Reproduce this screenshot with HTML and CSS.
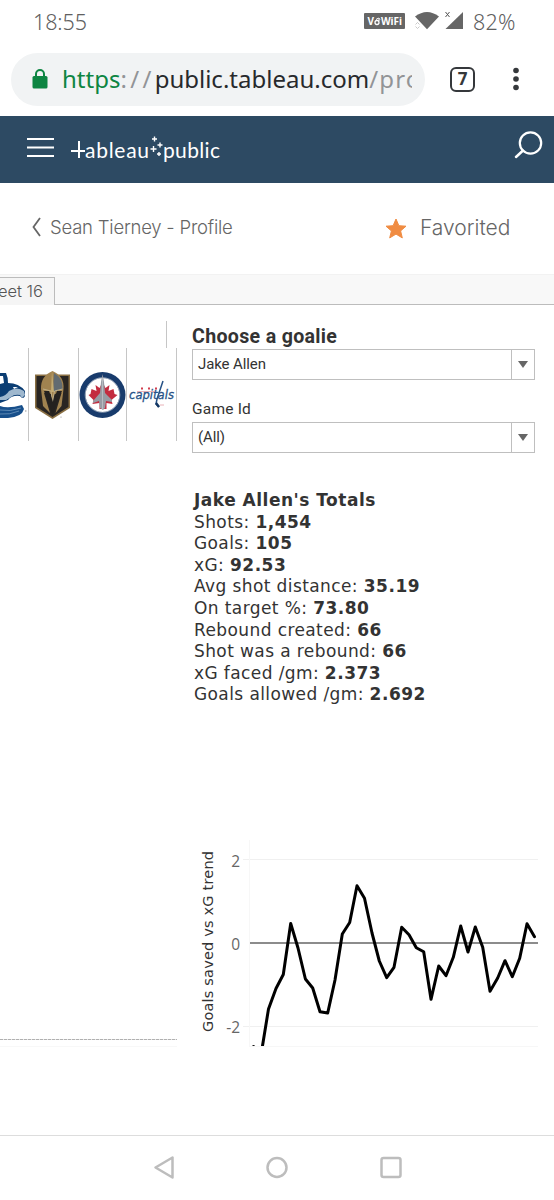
FILE: index.html
```html
<!DOCTYPE html>
<html lang="en">
<head>
<meta charset="utf-8">
<title>Tableau Public</title>
<link rel="stylesheet" href="styles.css">
</head>
<body>
<div class="screen">
  <div class="status">
    <span class="time">18:55</span>
    <svg class="status-icons" width="102" height="18" viewBox="363 12 102 18">
      <rect x="364" y="13" width="41" height="16" rx="1" fill="#666"/>
      <text x="367.500" y="25" class="vowifi" textLength="8">V</text>
      <circle cx="377" cy="22.500" r="2" fill="none" stroke="#fff" stroke-width="1.300"/>
      <path d="M376 19.500q3-3 4 0M379 18v3" fill="none" stroke="#fff"/>
      <text x="381" y="25" class="vowifi" textLength="21">WiFi</text>
      <path d="M415 16.500Q427 7.500 439 16.500L427 29.300Z" fill="#666"/>
      <path d="M415.500 24.500l2-2 2 2M415.500 26.500l2 2 2-2" fill="none" stroke="#bbb" stroke-width=".8"/>
      <path d="M445.500 12l4 5M449.500 12l-4 5" stroke="#555" stroke-width="1"/>
      <path d="M463 12V29H445.500Z" fill="#666"/>
    </svg>
    <span class="battery">82%</span>
  </div>
  <div class="browser">
    <div class="omnibox">
      <svg width="16" height="20" viewBox="0 0 16 20"><path d="M4 8V5a4 4 0 0 1 8 0v3" fill="none" stroke="#0d8542" stroke-width="2"/><rect x=".5" y="7" width="15" height="12.500" rx="1.500" fill="#0d8542"/></svg>
      <span class="url"><span class="scheme">https</span><span class="dim slashes">://</span>public.tableau.com<span class="dim path">/pro</span></span>
    </div>
    <div class="tabs-count">7</div>
    <svg class="more" width="6" height="24" viewBox="0 0 6 24" fill="#35383b"><circle cx="3" cy="3.500" r="2.800"/><circle cx="3" cy="12" r="2.800"/><circle cx="3" cy="20.500" r="2.800"/></svg>
  </div>
  <header class="site-head">
    <svg width="554" height="67" viewBox="0 116 554 67" fill="none" stroke="#fff" stroke-width="2.200">
      <path d="M27 139H54M27 147.500H54M27 156H54"/>
      <path d="M79 141V158M71 151H85" stroke-width="2"/>
      <g class="word"><text x="85" y="158" textLength="64">ableau</text><text x="163" y="158" textLength="57">public</text></g>
      <path d="M154.500 136.500v5M152 139h5M160 142.500v5M157.500 145h5M153.500 146v6M150.500 149h6M159 152v4M157 154h4" stroke-width="1.400"/>
      <circle cx="530.500" cy="143" r="10.700"/><path d="M523 150.500L516 157" stroke-linecap="round" stroke-width="2.500"/>
    </svg>
  </header>
  <div class="profile">
    <svg width="10" height="20" viewBox="0 0 10 20"><path d="M9 1L2.500 10l6.500 9" fill="none" stroke="#666" stroke-width="1.800"/></svg>
    <span class="author">Sean Tierney - Profile</span>
    <svg class="star" width="22" height="21" viewBox="0 0 22 21"><path d="M11 1l2.900 6.700 7.100.5-5.400 4.700 1.700 7L11 16.100 4.700 19.900l1.700-7L1 8.200l7.100-.5z" fill="#f08c42" stroke="#f08c42" stroke-linejoin="round"/></svg>
    <span class="fav">Favorited</span>
  </div>
  <div class="sheets"><div class="sheet"><span>Sheet 16</span></div></div>
  <main class="dash">
    <section class="teams">
      <svg width="180" height="130" viewBox="0 315 180 130">
        <path d="M28.500 348V441M78.500 348V441M126.500 348V441M176.500 348V441M166.500 321V348" stroke="#c6c6c6"/>
        <g>
          <path d="M0 373h6q2 4 2 10 11 0 17 8l0 5q-2 4-5 0-8-1-12 4l-8 3z" fill="#0b3d73"/>
          <path d="M9 391q8-5 15 0l1 4-3 3-2-3q-6-1-9 2l-5 3-6 0v-3q6-1 9-6z" fill="#9fb8ce"/>
          <path d="M0 376l3 0 1 7-4 1zM13 387l5 0-4 2z" fill="#fff"/>
          <path d="M0 406q8 3 22-1l2 4q-2 8-16 9H0z" fill="#174f8b"/>
          <path d="M0 410q10 2 21-2M0 414q10 1 19-3" fill="none" stroke="#6f98bf" stroke-width=".8"/>
          <circle cx="25.800" cy="411" r=".7" fill="#999"/>
        </g>
        <g>
          <path d="M35 374.500H70V408L52.500 419 35 408Z" fill="#896f43"/>
          <path d="M36.500 376H68.500V407L52.500 417 36.500 407Z" fill="#292522"/>
          <path d="M52.500 371q-12 5-11.500 18l2 17 7 7-6-20 7 1 1.500 6 2-6 7-1-6 20 6-7 2-17q1-13-11-18z" fill="#a18350"/>
          <path d="M54 373q9 5 8.500 16l-9.500 3z" fill="#626b71"/><path d="M43 389l8 2 1.500 11 2-11 8-2" fill="none" stroke="#c9bb96" stroke-width=".8"/>
          <path d="M44 391h5l4 11 4-11h5L52.500 415z" fill="#24211f"/>
          <path d="M52 371l2 21h-3z" fill="#c4ac73"/><circle cx="61" cy="417" r=".6" fill="#888"/>
        </g>
        <g>
          <circle cx="102.500" cy="395" r="23" fill="#183b6c"/><circle cx="102.500" cy="395" r="17" fill="#fff"/>
          <circle cx="102.500" cy="395" r="17.300" fill="none" stroke="#a9b5c4" stroke-width=".8"/>
          <path d="M102.500 382l3 6 4-3-1 6 5-2 1 5 3 1-6 5 1 4-6-1v6h-7v-6l-7 1 1-4-5-5 2-1 1-5 5 2-1-6 4 3z" fill="#c32c3f"/>
          <path d="M102.500 374l1.500 8 1 11 7 7v2l-6-1-1 7-2 2-3-2-1-7-6 2v-2l7-8 1-11z" fill="#989ca4"/><path d="M102.500 378v31" stroke="#c5c9ce" stroke-width=".7"/>
        </g>
        <g>
          <text class="caps" x="129" y="399" textLength="45" lengthAdjust="spacingAndGlyphs">capitals</text>
          <path d="M163 381l-6 18-1 5 3 3" fill="none" stroke="#275286" stroke-width="1.500"/>
          <path d="M156 403l3 4" stroke="#143763" stroke-width="2.500"/>
          <path d="M137 391.500H155M160 405h4" stroke="#e3a0a6" stroke-width=".8"/><path d="M141 388.500h2M148 388.500h2M155 388.500h2" stroke="#d23e4e" stroke-width="2"/>
        </g>
      </svg>
      <div class="rule"></div><div class="base"></div>
    </section>
    <section class="detail">
      <h2>Choose a goalie</h2>
      <div class="select"><span>Jake Allen</span><i><b></b></i></div>
      <div class="label">Game Id</div>
      <div class="select"><span>(All)</span><i><b></b></i></div>
      <div class="totals">
        <div><b>Jake Allen's Totals</b></div>
        <div>Shots: <b>1,454</b></div><div>Goals: <b>105</b></div><div>xG: <b>92.53</b></div>
        <div>Avg shot distance: <b>35.19</b></div><div>On target %: <b>73.80</b></div>
        <div>Rebound created: <b>66</b></div><div>Shot was a rebound: <b>66</b></div>
        <div>xG faced /gm: <b>2.373</b></div><div>Goals allowed /gm: <b>2.692</b></div>
      </div>
      <svg class="chart" width="354" height="217" viewBox="192 835 354 217">
        <path d="M243 859.500H538M243 1026.500H538" stroke="#f0f0f0"/><path d="M249.500 840V1047M249 1046.500H538" stroke="#f7f7f7"/>
        <path d="M250 943H538" stroke="#666" stroke-width="1.500"/>
        <clipPath id="plot"><path d="M249 840H540V1046H249Z"/></clipPath>
        <polyline clip-path="url(#plot)" fill="none" stroke="#000" stroke-width="3" stroke-linejoin="round" stroke-linecap="round" points="253.500,1046.500 261,1055 268.500,1009 276,988.500 283.300,974.500 290.700,923.500 298,948 305.400,979 312.700,988 320,1011.700 327.700,1013 335,980 342.300,934 349.700,922.500 357,885.700 364.500,898.300 372,933 379.300,961 386.700,977.700 394,967.300 401.700,927.300 409,934.700 416.300,947.700 423.700,951.700 431,999.300 438.700,966 446,975.700 453.300,957.300 460.700,926 468,952 475.300,927 482.700,947.300 490,991.300 497.700,978 505,960.700 512.300,976.700 519.700,958.300 527,923.700 534.500,936.700"/>
        <g class="ticks" text-anchor="end"><text x="240" y="866.500">2</text><text x="240" y="949.500">0</text><text x="240" y="1033">-2</text></g>
        <text class="axis" transform="translate(213 1032) rotate(-90)" textLength="181">Goals saved vs xG trend</text>
      </svg>
    </section>
  </main>
  <nav class="sysnav">
    <svg width="554" height="64" viewBox="0 1136 554 64" fill="none" stroke="#bdbdbd" stroke-width="2.500" stroke-linejoin="round"><path d="M172.500 1157.500V1177.500L155.500 1167.500Z"/><circle cx="277" cy="1167.500" r="9.500"/><rect x="381.500" y="1158" width="19" height="19" rx="2"/></svg>
  </nav>
</div>
</body>
</html>
```
FILE: styles.css
```css
*{box-sizing:border-box}
body{margin:0;background:#fff;font-family:Roboto,sans-serif;color:#333}
svg{display:block;flex:none}
.screen{width:554px;height:1200px;display:flex;flex-direction:column;overflow:hidden;white-space:nowrap}
.status{height:42px;display:flex;align-items:center;padding-left:33px;font:300 21.500px "Noto Sans",sans-serif;color:#606060}
.time{width:330px;letter-spacing:-.1px}
.status-icons{width:102px}
.battery{margin-left:8px;letter-spacing:.2px}
.vowifi{font:bold 10px "Noto Sans",sans-serif;fill:#fff}
.browser{height:74px;display:flex;align-items:center;padding:0 35px 0 11px}
.omnibox{width:414px;height:53px;border-radius:27px;background:#f1f3f4;display:flex;align-items:center;padding:0 13px 0 21px}
.url{margin-left:14px;width:350px;overflow:hidden;font:400 24px/40px "Noto Sans",sans-serif;color:#27292c}
.scheme{color:#0d8542}
.dim{color:#929497}
.slashes{letter-spacing:3.300px}
.path{letter-spacing:1.200px}
.tabs-count{margin-left:25px;width:25px;height:25px;border:2.500px solid #35383b;border-radius:6px;text-align:center;font:bold 17px/20px "Noto Sans",sans-serif;color:#35383b}
.more{margin-left:auto}
.site-head{height:67px;background:#2d4a63}
.word{font:400 21px Lato,sans-serif;fill:#fff;stroke:none}
.profile{height:91px;display:flex;align-items:center;padding:0 0 3px 31px;color:#666}
.author{margin-left:9px;width:335px;font:300 18.500px Inter,sans-serif;letter-spacing:-.22px}
.star{position:relative;top:1px}
.fav{margin-left:13px;font:300 21px Inter,sans-serif}
.sheets{height:31px;background:#f8f8f8;border-bottom:1px solid #bcbcbc;border-top:1px solid #f2f2f2;padding-top:2px}
.sheet{width:55px;height:28px;background:#f5f5f5;border:1px solid #bcbcbc;border-left:0;border-bottom:0;display:flex;justify-content:flex-end;overflow:hidden;padding-right:11px;font:300 16.500px/27px Inter,sans-serif;color:#555}
.dash{height:830px;display:grid;grid-template-columns:192px 1fr}
.teams{padding-top:10px}
.rule{margin-top:594px;width:177px;height:1px;background:repeating-linear-gradient(90deg,#b0b0b0 0 3px,#e6e6e6 3px 4px)}
.base{margin-top:6px;width:177px;height:1px;background:#f8f8f8}
h2{margin:19px 0 0;height:25px;font:bold 19.600px/25px Roboto,sans-serif;letter-spacing:.32px}
.select{width:343px;height:31px;border:1.500px solid #bfbfbf;display:flex;justify-content:space-between;font-size:15px;line-height:29px;letter-spacing:-.1px;padding-left:5px}
.select i{width:23px;border-left:1px solid #bfbfbf;display:flex;align-items:center;justify-content:center}
.select i b{border:5.500px solid transparent;border-top:7px solid #666;border-bottom:0}
.label{height:42px;padding-top:20px;font-size:15.500px;line-height:19px;letter-spacing:.2px}
.totals{margin-top:37px;padding-left:2px;height:216px;font:17px/21.600px "DejaVu Sans",Verdana,sans-serif;letter-spacing:.4px}
.totals b{letter-spacing:.5px}
.chart{margin-top:129px}
.ticks{font:15.500px "Open Sans",sans-serif;fill:#666}
.axis{font:14.500px "DejaVu Sans",sans-serif;fill:#333}
.caps{font:italic 12px "DejaVu Sans",sans-serif;fill:#275286;stroke:#275286;stroke-width:.3px}
.sysnav{height:65px;border-top:1px solid #ddd}
```
